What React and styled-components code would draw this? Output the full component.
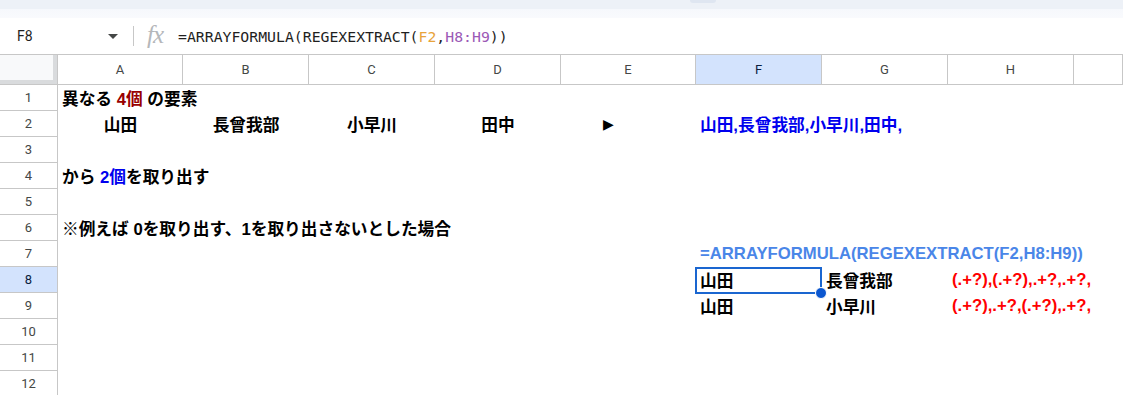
import React from 'react';
import styled, { createGlobalStyle } from 'styled-components';

const GlobalStyle = createGlobalStyle`
  body {
    margin: 0;
    background: #fff;
    font-family: "Liberation Sans", "Noto Sans CJK JP", sans-serif;
    overflow: hidden;
  }
`

const COLS = '58px 125px 126px 126px 126px 135px 126px 126px 126px 1fr'
const LETTERS = ['A', 'B', 'C', 'D', 'E', 'F', 'G', 'H', '']

function buildRows() {
  return [
    [<>異なる <Dark>4個</Dark> の要素</>],
    [
      { c: '山田', center: true },
      { c: '長曾我部', center: true },
      { c: '小早川', center: true },
      { c: '田中', center: true },
      { c: <Arrow>▶</Arrow>, center: true },
      { c: '山田,長曾我部,小早川,田中,', color: '#0000ee' },
    ],
    [],
    [<>から <Blue>2個</Blue>を取り出す</>],
    [],
    ['※例えば 0を取り出す、1を取り出さないとした場合'],
    [null, null, null, null, null, { c: '=ARRAYFORMULA(REGEXEXTRACT(F2,H8:H9))', color: '#4a86e8' }],
    [null, null, null, null, null, { c: '山田', selected: true }, '長曾我部', { c: '(.+?),(.+?),.+?,.+?,', color: '#ff0000' }],
    [null, null, null, null, null, '山田', '小早川', { c: '(.+?),.+?,(.+?),.+?,', color: '#ff0000' }],
    [],
    [],
    [],
  ]
}

function App() {
  const rows = buildRows()
  return (
    <Page>
      <GlobalStyle />
      <TopStrip>
        <TabNub />
      </TopStrip>
      <FormulaBar>
        <NameBox>
          <span>F8</span>
          <Caret />
        </NameBox>
        <Divider />
        <FxLabel>fx</FxLabel>
        <Formula>
          =ARRAYFORMULA(REGEXEXTRACT(<Ref $c="#e8a33a">F2</Ref>,<Ref $c="#9b59b6">H8:H9</Ref>))
        </Formula>
      </FormulaBar>
      <Sheet>
        <Corner />
        {LETTERS.map((l, i) => (
          <ColHead key={l + i} $active={l === 'F'}>{l}</ColHead>
        ))}
        {rows.map((row, r) => (
          <React.Fragment key={r}>
            <RowHead $active={r === 7}>{r + 1}</RowHead>
            {LETTERS.map((_, c) => {
              const v = row[c]
              const cell = v && typeof v === 'object' && 'c' in v ? v : { c: v }
              return (
                <Cell
                  key={c}
                  $center={cell.center}
                  $color={cell.color}
                  $selected={cell.selected}
                >
                  {cell.c != null && <span>{cell.c}</span>}
                </Cell>
              )
            })}
          </React.Fragment>
        ))}
      </Sheet>
    </Page>
  )
}

export default App

const Page = styled.div`
  width: 1123px;
  height: 395px;
  overflow: hidden;
  background: #fff;
`
const TopStrip = styled.div`
  height: 18px;
  background: linear-gradient(#edf1f7 0, #edf1f7 9px, #f6f8fc 9px, #f9fafd 18px);
`
const TabNub = styled.div`
  margin-left: 690px;
  width: 26px;
  height: 3px;
  background: #dfe6f1;
  border-radius: 0 0 4px 4px;
`
const FormulaBar = styled.div`
  box-sizing: border-box;
  height: 37px;
  display: flex;
  align-items: center;
  border-bottom: 1px solid #c7c7c7;
`
const NameBox = styled.div`
  width: 118px;
  box-sizing: border-box;
  padding-left: 17px;
  display: flex;
  align-items: center;
  justify-content: space-between;
  font-family: Roboto, "Liberation Sans", sans-serif;
  font-size: 14px;
  color: #1f1f1f;
`
const Caret = styled.span`
  width: 0;
  height: 0;
  border-left: 5px solid transparent;
  border-right: 5px solid transparent;
  border-top: 5px solid #444746;
`
const Divider = styled.div`
  width: 1px;
  height: 20px;
  background: #c7c7c7;
  margin: 0 13px 0 15px;
`
const FxLabel = styled.span`
  font-family: "Liberation Serif", serif;
  font-style: italic;
  font-size: 25px;
  color: #b5b7ba;
  letter-spacing: -1px;
  width: 31px;
  line-height: 1;
  margin-top: -4px;
`
const Formula = styled.div`
  font-family: "DejaVu Sans Mono", monospace;
  font-size: 14.8px;
  color: #1f1f1f;
  white-space: nowrap;
`
const Ref = styled.span`
  color: ${p => p.$c};
`
const Sheet = styled.div`
  display: grid;
  grid-template-columns: ${COLS};
  grid-template-rows: 30px;
  grid-auto-rows: 26px;
`
const Corner = styled.div`
  box-sizing: border-box;
  background: #f8f9fa;
  border-right: 1px solid #c7c7c7;
  border-bottom: 1px solid #c7c7c7;
  box-shadow: inset -4px -4px 0 #d9dbdd;
`
const ColHead = styled.div`
  box-sizing: border-box;
  display: flex;
  align-items: center;
  justify-content: center;
  border-right: 1px solid #c7c7c7;
  border-bottom: 1px solid #c7c7c7;
  background: ${p => (p.$active ? '#d3e3fd' : '#fff')};
  color: ${p => (p.$active ? '#0b1e3f' : '#444746')};
  font-family: Roboto, "Liberation Sans", sans-serif;
  font-size: 13px;
`
const RowHead = styled(ColHead)``
const Cell = styled.div`
  position: relative;
  min-width: 0;
  display: flex;
  align-items: center;
  justify-content: ${p => (p.$center ? 'center' : 'flex-start')};
  padding: 0 4px;
  white-space: nowrap;
  overflow: visible;
  font-size: 16.7px;
  font-weight: 700;
  color: ${p => p.$color || '#000'};
  z-index: ${p => (p.$selected ? 2 : 1)};

  ${p => p.$selected && `
    &::after {
      content: '';
      position: absolute;
      inset: 0 0 -1px -1px;
      border: 2px solid #1a66d0;
    }
    &::before {
      content: '';
      position: absolute;
      right: -5px;
      bottom: -6px;
      width: 10px;
      height: 10px;
      border-radius: 50%;
      background: #0b57d0;
      border: 1px solid #fff;
      z-index: 3;
    }
  `}
`
const Dark = styled.span`
  color: #990000;
`
const Blue = styled.span`
  color: #0000ee;
`
const Arrow = styled.span`
  display: inline-block;
  margin-right: 40px;
  font-family: "DejaVu Sans", sans-serif;
  font-size: 14px;
  font-weight: 400;
`
